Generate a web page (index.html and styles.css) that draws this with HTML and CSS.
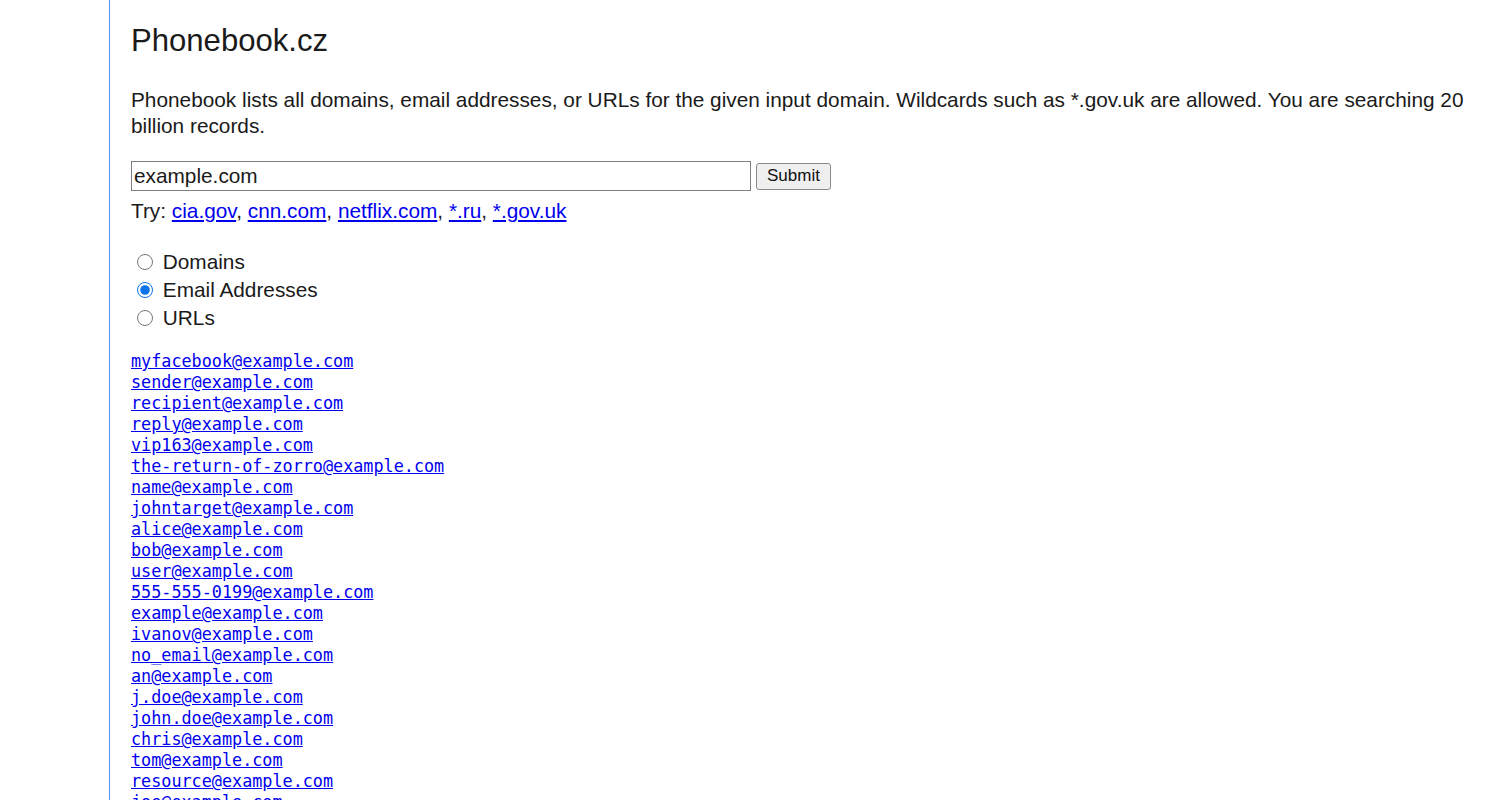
FILE: index.html
```html
<!DOCTYPE html>
<html>
<head>
<meta charset="utf-8">
<title>Phonebook.cz</title>
<link rel="stylesheet" href="styles.css">
</head>
<body>
<div class="page">
  <h1 class="title">Phonebook.cz</h1>
  <p class="intro">Phonebook lists all domains, email addresses, or URLs for the given input domain. Wildcards such as *.gov.uk are allowed. You are searching 20 billion records.</p>
  <form class="search">
    <div class="search-row">
      <input class="search-input" type="text" value="example.com">
      <button class="submit" type="button">Submit</button>
    </div>
    <div class="try">Try: <a href="#">cia.gov</a>, <a href="#">cnn.com</a>, <a href="#">netflix.com</a>, <a href="#">*.ru</a>, <a href="#">*.gov.uk</a></div>
    <div class="modes">
      <label class="mode"><input type="radio" name="m"> Domains</label>
      <label class="mode"><input type="radio" name="m" checked> Email Addresses</label>
      <label class="mode"><input type="radio" name="m"> URLs</label>
    </div>
  </form>
  <div class="results">
    <a href="#">myfacebook@example.com</a>
    <a href="#">sender@example.com</a>
    <a href="#">recipient@example.com</a>
    <a href="#">reply@example.com</a>
    <a href="#">vip163@example.com</a>
    <a href="#">the-return-of-zorro@example.com</a>
    <a href="#">name@example.com</a>
    <a href="#">johntarget@example.com</a>
    <a href="#">alice@example.com</a>
    <a href="#">bob@example.com</a>
    <a href="#">user@example.com</a>
    <a href="#">555-555-0199@example.com</a>
    <a href="#">example@example.com</a>
    <a href="#">ivanov@example.com</a>
    <a href="#">no_email@example.com</a>
    <a href="#">an@example.com</a>
    <a href="#">j.doe@example.com</a>
    <a href="#">john.doe@example.com</a>
    <a href="#">chris@example.com</a>
    <a href="#">tom@example.com</a>
    <a href="#">resource@example.com</a>
    <a href="#">joe@example.com</a>
  </div>
</div>
</body>
</html>
```
FILE: styles.css
```css
html, body {
  margin: 0;
  padding: 0;
  background: #fff;
}
body {
  font-family: "Liberation Sans", Arial, sans-serif;
  color: #1a1a1a;
  overflow: hidden;
  height: 800px;
}
.page {
  margin-left: 109px;
  border-left: 1px solid #5a8ef0;
  min-height: 800px;
  padding-left: 21px;
  padding-right: 20px;
  padding-top: 24px;
  box-sizing: border-box;
}
.title {
  font-size: 31.1px;
  font-weight: normal;
  line-height: 34px;
  margin: 0;
}
.intro {
  font-size: 20.8px;
  line-height: 26px;
  margin: 29px 0 0 0;
}
.search {
  margin-top: 22px;
}
.search-row {
  display: flex;
  align-items: center;
  gap: 5px;
  height: 30px;
}
.search-input {
  width: 620px;
  height: 30px;
  box-sizing: border-box;
  border: 1px solid #808080;
  border-radius: 0;
  padding: 0 2px;
  margin: 0;
  font-family: "Liberation Sans", Arial, sans-serif;
  font-size: 20.8px;
  color: #1a1a1a;
}
.submit {
  width: 75px;
  height: 27px;
  box-sizing: border-box;
  border: 1px solid #8a8a8a;
  border-radius: 3px;
  background: #efefef;
  font-family: "Liberation Sans", Arial, sans-serif;
  font-size: 17px;
  color: #111;
  padding: 0;
  margin: 0;
}
.try {
  font-size: 20.8px;
  line-height: 23px;
  margin-top: 8px;
}
.try a {
  color: #0000ee;
}
.modes {
  margin-top: 26px;
  display: flex;
  flex-direction: column;
}
.mode {
  font-size: 20.8px;
  height: 28px;
  display: flex;
  align-items: center;
  white-space: pre;
}
.mode input {
  width: 16px;
  height: 16px;
  margin: 0 4px 0 6px;
  accent-color: #0b74ea;
}
.results {
  margin-top: 19px;
  display: flex;
  flex-direction: column;
  align-items: flex-start;
}
.results a {
  font-family: "DejaVu Sans Mono", monospace;
  font-size: 16.8px;
  line-height: 21px;
  color: #0000ee;
}
```
